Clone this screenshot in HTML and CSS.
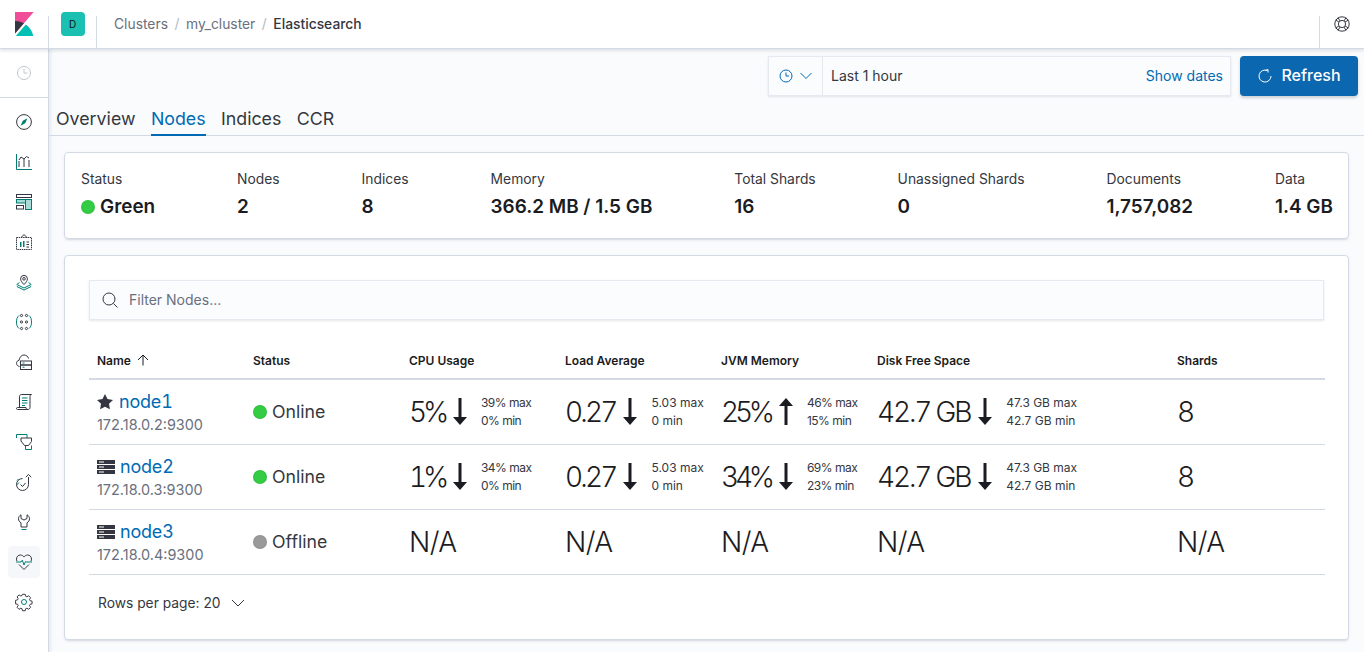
FILE: index.html
```html
<!DOCTYPE html>
<html lang="en">
<head>
    <meta charset="UTF-8">
    <meta name="viewport" content="width=device-width, initial-scale=1.0">
    <title>Elasticsearch - Stack Monitoring</title>
    <link rel="stylesheet" href="styles.css">
</head>
<body>
    <!-- Top bar -->
    <header class="topbar">
        <a class="logo-cell" href="#">
            <svg width="24" height="24" viewBox="0 0 32 32"><path d="M4 0v28.789L28.935.017z" fill="#F04E98"/><path d="M4 12v16.789l11.906-13.738A24.721 24.721 0 0 0 4 12" fill="#343741"/><path d="M18.479 16.664L6.268 30.754l-1.073 1.237h23.191c-1.252-6.292-4.883-11.719-9.908-15.327" fill="#00BFB3"/></svg>
        </a>
        <div class="space-cell"><span class="space-badge">D</span></div>
        <nav class="breadcrumbs">
            <a href="#">Clusters</a><span class="crumb-sep">/</span>
            <a href="#">my_cluster</a><span class="crumb-sep">/</span>
            <span class="crumb-current">Elasticsearch</span>
        </nav>
        <div class="help-cell">
            <svg width="16" height="16" viewBox="0 0 16 16" fill="none" stroke="#343741" stroke-width="1"><circle cx="8" cy="8" r="7.200"/><circle cx="8" cy="8" r="3.600"/><path d="M4 1.600l2 3.300M1.600 4l3.300 2M12 1.600l-2 3.300M14.400 4l-3.300 2M4 14.400l2-3.300M1.600 12l3.300-2M12 14.400l-2-3.300M14.400 12l-3.300-2"/></svg>
        </div>
    </header>

    <div class="layout">
        <!-- Side nav -->
        <aside class="sidenav">
            <div class="nav-recent">
                <svg width="16" height="16" viewBox="0 0 16 16" fill="none" stroke="#c2c7d0" stroke-width="1"><circle cx="8" cy="8" r="6.500"/><path d="M8 3.800V8h3.400"/></svg>
            </div>
            <ul class="nav-list">
                <li class="nav-item"><svg class="app-icon" viewBox="0 0 16 16"><circle class="ln" cx="8" cy="8" r="7.400"/><path class="fl" d="M11.400 4.300L9.200 9.200 4.600 11.700 6.800 6.800z"/></svg></li>
                <li class="nav-item"><svg class="app-icon" viewBox="0 0 16 16"><path class="tl" d="M.5 0v15.500H16"/><path class="ln" d="M3 13V7M8 13V5M13 13V6M3 6l2-3 3 2 2.500-2.500L13 4"/></svg></li>
                <li class="nav-item"><svg class="app-icon" viewBox="0 0 16 16"><rect class="ln" x=".5" y=".5" width="15" height="3"/><rect class="tl tint" x=".5" y="5.500" width="9" height="3.500"/><rect class="ln" x=".5" y="11.500" width="7" height="3.500"/><rect class="tl tint" x="9.500" y="5.500" width="6" height="10"/></svg></li>
                <li class="nav-item"><svg class="app-icon" viewBox="0 0 16 16"><path class="ln" d="M.5 3.500h15v12H.5z" stroke-dasharray="1.500 .7"/><path class="ln" d="M5 3.500L8 .6l3 2.900"/><path class="fl" d="M4 8h1.500v5H4zM7 7h1.500v6H7z"/><path class="ln" d="M10.500 8H13M10.500 10.500H13M10.500 13H13"/></svg></li>
                <li class="nav-item"><svg class="app-icon" viewBox="0 0 16 16"><path class="ln" d="M8 10.500C6 8.500 4.600 6.800 4.600 4.800a3.400 3.400 0 0 1 6.800 0c0 2-1.400 3.700-3.400 5.700z"/><circle class="ln" cx="8" cy="4.800" r="1.300"/><path class="tl" d="M3.500 8.500L.8 10.500 8 14l7.200-3.500-2.700-2M.8 12.500L8 16l7.200-3.500"/></svg></li>
                <li class="nav-item"><svg class="app-icon" viewBox="0 0 16 16"><path class="tl" d="M3 1.500C1 3 .5 5.500.5 8s.5 5 2.500 6.500M13 1.500c2 1.500 2.500 4 2.500 6.500s-.5 5-2.500 6.500"/><g class="ln"><circle cx="5.500" cy="1.500" r="1.100"/><circle cx="10.500" cy="1.500" r="1.100"/><circle cx="5.500" cy="8" r="1.100"/><circle cx="10.500" cy="8" r="1.100"/><circle cx="5.500" cy="14.500" r="1.100"/><circle cx="10.500" cy="14.500" r="1.100"/></g></svg></li>
                <li class="nav-item"><svg class="app-icon" viewBox="0 0 16 16"><path class="ln" d="M3.500 12.500C1.500 12 .5 10.800.5 9.300c0-1.500 1-2.800 2.500-3C3.500 3.300 5.500 1 8 1c2.300 0 4 1.500 4.500 3.500"/><rect class="ln" x="4.500" y="7" width="11" height="4"/><rect class="ln" x="4.500" y="11" width="11" height="4.500"/><path class="tl" d="M6.500 9h2M6.500 13.200h2"/></svg></li>
                <li class="nav-item"><svg class="app-icon" viewBox="0 0 16 16"><path class="ln" d="M3.500 13V2.500C3.500 1.400 4.200.5 5.500.5h10c-1 0-1.500 1-1.500 2v11c0 1.200-.8 2-2 2H1.500c-.8 0-1-.6-1-1s.2-1 1-1h8.500c0 1 .5 2 2 2"/><path class="tl" d="M6 4h5.500M6 6.500h5.500M6 9h5.500M6 11.500h3"/></svg></li>
                <li class="nav-item"><svg class="app-icon" viewBox="0 0 16 16"><path class="tl" d="M.5 4V.5h10.500v3.500M15.500 11.500v4h-6v-3.500"/><path class="ln" d="M5 4h10.500v3.500L12.500 11.500H8.500L5 7z" fill="none"/></svg></li>
                <li class="nav-item"><svg class="app-icon" viewBox="0 0 16 16"><path class="ln" d="M12.500 3v7.500a6 6 0 1 1-6-6"/><path class="ln" d="M9.800 3.300L12.500.4l2.700 2.900"/><path class="tl" d="M3 8.500L.8 11M1 6.500c.4-.6.900-1.100 1.500-1.500"/><path class="ln" d="M4.500 10.500l2 2 3-3.500"/></svg></li>
                <li class="nav-item"><svg class="app-icon" viewBox="0 0 16 16"><path class="ln" d="M5 .8C3.300 1.600 2.500 3.200 2.500 4.800c0 1.800 1 3.200 2.500 4V13h6V8.800c1.500-.8 2.500-2.200 2.500-4 0-1.600-.8-3.200-2.500-4V4.500L8 6 5 4.500z"/><path class="tl" d="M5.500 15.500h5"/></svg></li>
                <li class="nav-item active"><svg class="app-icon" viewBox="0 0 16 16"><path class="ln" d="M1 7C.6 6.200.5 5.600.5 5c0-2.400 1.900-4 3.800-4C5.800 1 7.200 1.800 8 3c.8-1.200 2.200-2 3.700-2 1.900 0 3.800 1.600 3.800 4 0 .6-.1 1.200-.5 2M3 10.500l5 5 5-5"/><path class="tl" d="M0 8h5l1.300-1.800L8 11l1.500-3.500.8.500H16"/></svg></li>
                <li class="nav-item"><svg class="app-icon" viewBox="0 0 16 16"><path class="ln" d="M6.600.5h2.800l.4 2 1.300.6 1.800-1.100 2 2-1.100 1.800.6 1.300 2 .4v2.800l-2 .4-.6 1.300 1.100 1.800-2 2-1.800-1.100-1.300.6-.4 2H6.600l-.4-2-1.300-.6-1.800 1.100-2-2 1.100-1.800-.6-1.300-2-.4V6.600l2-.4.6-1.300L1.100 3.100l2-2 1.800 1.100 1.300-.6z" transform="translate(0 -.2) scale(.98)"/><circle class="tl" cx="8" cy="8" r="2.500"/></svg></li>
            </ul>
        </aside>

        <main class="content">
            <!-- Time picker -->
            <div class="toolbar">
                <div class="datepicker">
                    <div class="datepicker-quick">
                        <svg width="14" height="14" viewBox="0 0 14 14" fill="none" stroke="#006bb4" stroke-width="1"><circle cx="7" cy="7" r="6"/><path d="M7 3.500V7h3"/></svg>
                        <svg width="12" height="8" viewBox="0 0 12 8" fill="none" stroke="#006bb4" stroke-width="1"><path d="M.5 1l5.500 5.500L11.500 1"/></svg>
                    </div>
                    <div class="datepicker-range">
                        <span>Last 1 hour</span>
                        <a href="#" class="show-dates">Show dates</a>
                    </div>
                </div>
                <button class="refresh-btn">
                    <svg width="14" height="14" viewBox="0 0 14 14" fill="none" stroke="#fff" stroke-width="1"><path d="M9.500 1.600A6 6 0 1 0 13 7"/><path d="M7.500 1.500l2.500-1v3"/></svg>
                    <span>Refresh</span>
                </button>
            </div>

            <!-- Tabs -->
            <div class="tabs">
                <a href="#" class="tab">Overview</a>
                <a href="#" class="tab selected">Nodes</a>
                <a href="#" class="tab">Indices</a>
                <a href="#" class="tab">CCR</a>
            </div>

            <!-- Summary -->
            <section class="panel summary">
                <div class="stat"><div class="stat-label">Status</div><div class="stat-value"><span class="dot green"></span>Green</div></div>
                <div class="stat"><div class="stat-label">Nodes</div><div class="stat-value">2</div></div>
                <div class="stat"><div class="stat-label">Indices</div><div class="stat-value">8</div></div>
                <div class="stat"><div class="stat-label">Memory</div><div class="stat-value">366.2 MB / 1.5 GB</div></div>
                <div class="stat"><div class="stat-label">Total Shards</div><div class="stat-value">16</div></div>
                <div class="stat"><div class="stat-label">Unassigned Shards</div><div class="stat-value">0</div></div>
                <div class="stat"><div class="stat-label">Documents</div><div class="stat-value">1,757,082</div></div>
                <div class="stat"><div class="stat-label">Data</div><div class="stat-value">1.4 GB</div></div>
            </section>

            <!-- Nodes table -->
            <section class="panel nodes">
                <div class="filter">
                    <svg width="16" height="16" viewBox="0 0 16 16" fill="none" stroke="#343741" stroke-width="1"><circle cx="7" cy="7" r="6"/><path d="M11.500 11.500L15.500 15.500"/></svg>
                    <input type="text" placeholder="Filter Nodes...">
                </div>

                <table class="nodes-table">
                    <thead>
                        <tr>
                            <th>Name <svg class="sort-icon" width="12" height="12" viewBox="0 0 12 12" fill="none" stroke="#1a1c21" stroke-width="1"><path d="M6 1v10.500M1 6l5-5 5 5"/></svg></th>
                            <th>Status</th>
                            <th>CPU Usage</th>
                            <th>Load Average</th>
                            <th>JVM Memory</th>
                            <th class="wide">Disk Free Space</th>
                            <th>Shards</th>
                        </tr>
                    </thead>
                    <tbody>
                        <tr>
                            <td>
                                <div class="node-name"><svg class="star" width="16" height="16" viewBox="0 0 16 16"><path d="M8 0l2.500 5.100 5.500.8-4 3.900.9 5.500L8 12.700l-4.900 2.600.9-5.500-4-3.900 5.500-.8z" fill="#343741"/></svg><a href="#">node1</a></div>
                                <div class="node-addr">172.18.0.2:9300</div>
                            </td>
                            <td><div class="status"><span class="dot green"></span>Online</div></td>
                            <td><div class="metric"><span class="metric-value pct">5%</span><svg class="trend" width="14" height="28" viewBox="0 0 14 28"><path d="M5.500 0h3v20h-3zM0 19h14l-7 8z" fill="#1a1c21"/></svg><div class="metric-range pct"><span>39% max</span><span>0% min</span></div></div></td>
                            <td><div class="metric"><span class="metric-value dec">0.27</span><svg class="trend" width="14" height="28" viewBox="0 0 14 28"><path d="M5.500 0h3v20h-3zM0 19h14l-7 8z" fill="#1a1c21"/></svg><div class="metric-range"><span>5.03 max</span><span>0 min</span></div></div></td>
                            <td><div class="metric"><span class="metric-value pct">25%</span><svg class="trend" width="14" height="28" viewBox="0 0 14 28"><path d="M5.500 27h3V7h-3zM0 8h14L7 0z" fill="#1a1c21"/></svg><div class="metric-range pct"><span>46% max</span><span>15% min</span></div></div></td>
                            <td><div class="metric"><span class="metric-value">42.7 GB</span><svg class="trend" width="14" height="28" viewBox="0 0 14 28"><path d="M5.500 0h3v20h-3zM0 19h14l-7 8z" fill="#1a1c21"/></svg><div class="metric-range"><span>47.3 GB max</span><span>42.7 GB min</span></div></div></td>
                            <td><span class="plain-value">8</span></td>
                        </tr>
                        <tr>
                            <td>
                                <div class="node-name"><svg class="server" width="18" height="16" viewBox="0 0 18 16"><path d="M0 1h18v4H0zM0 6h18v4H0zM0 11h18v4H0z" fill="#343741"/><path d="M2 2.500h5v1H2zM2 7.500h5v1H2zM2 12.500h5v1H2z" fill="#fff"/></svg><a href="#">node2</a></div>
                                <div class="node-addr">172.18.0.3:9300</div>
                            </td>
                            <td><div class="status"><span class="dot green"></span>Online</div></td>
                            <td><div class="metric"><span class="metric-value pct">1%</span><svg class="trend" width="14" height="28" viewBox="0 0 14 28"><path d="M5.500 0h3v20h-3zM0 19h14l-7 8z" fill="#1a1c21"/></svg><div class="metric-range pct"><span>34% max</span><span>0% min</span></div></div></td>
                            <td><div class="metric"><span class="metric-value dec">0.27</span><svg class="trend" width="14" height="28" viewBox="0 0 14 28"><path d="M5.500 0h3v20h-3zM0 19h14l-7 8z" fill="#1a1c21"/></svg><div class="metric-range"><span>5.03 max</span><span>0 min</span></div></div></td>
                            <td><div class="metric"><span class="metric-value pct">34%</span><svg class="trend" width="14" height="28" viewBox="0 0 14 28"><path d="M5.500 0h3v20h-3zM0 19h14l-7 8z" fill="#1a1c21"/></svg><div class="metric-range pct"><span>69% max</span><span>23% min</span></div></div></td>
                            <td><div class="metric"><span class="metric-value">42.7 GB</span><svg class="trend" width="14" height="28" viewBox="0 0 14 28"><path d="M5.500 0h3v20h-3zM0 19h14l-7 8z" fill="#1a1c21"/></svg><div class="metric-range"><span>47.3 GB max</span><span>42.7 GB min</span></div></div></td>
                            <td><span class="plain-value">8</span></td>
                        </tr>
                        <tr>
                            <td>
                                <div class="node-name"><svg class="server" width="18" height="16" viewBox="0 0 18 16"><path d="M0 1h18v4H0zM0 6h18v4H0zM0 11h18v4H0z" fill="#343741"/><path d="M2 2.500h5v1H2zM2 7.500h5v1H2zM2 12.500h5v1H2z" fill="#fff"/></svg><a href="#">node3</a></div>
                                <div class="node-addr">172.18.0.4:9300</div>
                            </td>
                            <td><div class="status"><span class="dot gray"></span>Offline</div></td>
                            <td><span class="plain-value">N/A</span></td>
                            <td><span class="plain-value">N/A</span></td>
                            <td><span class="plain-value">N/A</span></td>
                            <td><span class="plain-value">N/A</span></td>
                            <td><span class="plain-value">N/A</span></td>
                        </tr>
                    </tbody>
                </table>

                <div class="pagination">
                    Rows per page: 20
                    <svg width="14" height="8" viewBox="0 0 14 8" fill="none" stroke="#343741" stroke-width="1"><path d="M1 1l6 6 6-6"/></svg>
                </div>
            </section>
        </main>
    </div>
</body>
</html>
```

FILE: styles.css
```css
/* ===== Base ===== */
* {
    box-sizing: border-box;
}

html, body {
    height: 100%;
}

body {
    margin: 0;
    overflow: hidden;
    background: #fafbfd;
    color: #343741;
    font-family: Inter, "Liberation Sans", sans-serif;
    font-size: 14px;
}

a {
    color: #006bb4;
    text-decoration: none;
}

/* ===== Top bar ===== */
.topbar {
    position: relative;
    z-index: 2;
    display: flex;
    height: 49px;
    background: #fff;
    border-bottom: 1px solid #d3dae6;
    box-shadow: 0 2px 3px rgba(65, 78, 101, 0.14);
}

.logo-cell {
    width: 48px;
    display: flex;
    align-items: center;
    padding-left: 12px;
}

.space-cell {
    width: 49px;
    display: flex;
    align-items: center;
    justify-content: center;
    position: relative;
}

.space-cell::before,
.space-cell::after,
.help-cell::before {
    content: "";
    position: absolute;
    top: 16px;
    bottom: 0;
    width: 1px;
    background: #d3dae6;
}

.space-cell::before {
    left: 0;
}

.space-cell::after {
    right: 0;
}

.space-badge {
    width: 24px;
    height: 24px;
    border-radius: 4px;
    background: #1bc0b3;
    color: #111;
    font-size: 10px;
    display: flex;
    align-items: center;
    justify-content: center;
}

.breadcrumbs {
    flex: 1;
    display: flex;
    align-items: center;
    padding: 0 0 0 17px;
    font-size: 13.85px;
}

.breadcrumbs a {
    color: #69707d;
}

.crumb-sep {
    margin: 0 6.5px;
    color: #b4bac6;
}

.crumb-current {
    color: #343741;
    font-weight: 500;
}

.help-cell {
    position: relative;
    width: 45px;
    display: flex;
    align-items: center;
    justify-content: center;
}

.help-cell::before {
    left: 0;
}

/* ===== Layout ===== */
.layout {
    display: flex;
    height: 603px;
}

.sidenav {
    width: 49px;
    flex: none;
    background: #fff;
    border-right: 1px solid #d3dae6;
    box-shadow: 2px 0 3px rgba(65, 78, 101, 0.1);
}

.nav-recent {
    height: 49px;
    display: flex;
    align-items: center;
    justify-content: center;
    border-bottom: 1px solid #d3dae6;
}

.nav-list {
    list-style: none;
    margin: 0;
    padding: 4px 8px 0;
}

.nav-item {
    height: 40px;
    display: flex;
    align-items: center;
    justify-content: center;
}

.nav-item.active {
    height: 32px;
    margin: 4px 0;
    background: #f5f7fa;
    border-radius: 4px;
}

.app-icon {
    width: 16px;
    height: 16px;
    overflow: visible;
}

.app-icon .ln,
.app-icon .ln circle {
    fill: none;
    stroke: #343741;
    stroke-width: 1;
}

.app-icon .tl {
    fill: none;
    stroke: #017d73;
    stroke-width: 1;
}

.app-icon .tl.tint {
    fill: #a8dbd6;
}

.app-icon .fl {
    fill: #017d73;
}

/* ===== Content ===== */
.content {
    flex: 1;
    min-width: 0;
}

.toolbar {
    display: flex;
    justify-content: flex-end;
    gap: 9px;
    padding: 7px 6px 0 0;
}

.datepicker {
    width: 463px;
    height: 40px;
    display: flex;
    background: #fbfcfd;
    border: 1px solid #e6e9ef;
    box-shadow: 0 1px 2px rgba(65, 78, 101, 0.14);
}

.datepicker-quick {
    width: 54px;
    display: flex;
    align-items: center;
    justify-content: center;
    gap: 7px;
    border-right: 1px solid #e6e9ef;
}

.datepicker-range {
    flex: 1;
    display: flex;
    align-items: center;
    justify-content: space-between;
    padding: 0 7px 2px 8px;
    color: #343741;
}

.refresh-btn {
    width: 118px;
    height: 40px;
    display: flex;
    align-items: center;
    justify-content: center;
    gap: 9px;
    padding: 0 0 0 1px;
    border: 0;
    border-radius: 4px;
    background: #0a67b0;
    color: #fff;
    font-family: inherit;
    font-size: 16px;
    font-weight: 500;
    box-shadow: 0 2px 3px rgba(65, 78, 101, 0.25);
}

.refresh-btn span {
    padding-bottom: 2px;
}

/* ===== Tabs ===== */
.tabs {
    display: flex;
    gap: 15.4px;
    height: 40px;
    padding: 4px 0 0 7px;
    border-bottom: 1px solid #d3dae6;
}

.tab {
    height: 36px;
    color: #343741;
    font-size: 17.8px;
    line-height: 38px;
}

.tab.selected {
    color: #006bb4;
    border-bottom: 2px solid #006bb4;
}

/* ===== Panels ===== */
.panel {
    margin: 16px 15px 0;
    background: #fff;
    border: 1px solid #d3dae6;
    border-radius: 4px;
    box-shadow: 0 2px 2px -1px rgba(152, 162, 179, 0.3), 0 1px 5px -2px rgba(152, 162, 179, 0.3);
}

.summary {
    height: 87px;
    display: flex;
    justify-content: space-between;
    padding: 18px 15px 0 16px;
}

.stat-label {
    font-size: 13.85px;
    line-height: 17px;
    color: #343741;
}

.stat-value {
    display: flex;
    align-items: center;
    margin-top: 7px;
    font-size: 18.9px;
    line-height: 24px;
    font-weight: 600;
    color: #1a1c21;
}

.dot {
    display: inline-block;
    width: 14px;
    height: 14px;
    border-radius: 50%;
    margin-right: 5px;
    border: 1px solid rgba(0, 0, 0, 0.06);
}

.dot.green {
    background: #33cc44;
}

.dot.gray {
    background: #9a9a9a;
}

.nodes {
    height: 385px;
    padding: 24px 24px 0;
}

.filter {
    height: 40px;
    display: flex;
    align-items: center;
    gap: 9px;
    padding-left: 12px;
    background: #fbfcfd;
    border: 1px solid #e6e9ef;
    box-shadow: 0 1px 2px rgba(65, 78, 101, 0.14);
}

.filter input {
    flex: 1;
    border: 0;
    outline: 0;
    padding-bottom: 2px;
    background: none;
    font-family: inherit;
    font-size: 14px;
}

.filter input::placeholder {
    color: #69707d;
}

/* ===== Nodes table ===== */
.nodes-table {
    width: 100%;
    margin-top: 21px;
    border-collapse: collapse;
    table-layout: fixed;
}

.nodes-table th {
    height: 38px;
    width: 156px;
    padding: 2px 8px 0;
    text-align: left;
    font-size: 12px;
    font-weight: 600;
    color: #1a1c21;
    border-bottom: 2px solid #d3dae6;
}

.nodes-table th.wide {
    width: 300px;
}

.sort-icon {
    margin-left: 3px;
    vertical-align: -1px;
}

.nodes-table td {
    height: 65px;
    padding: 0 8px;
    border-bottom: 1px solid #d3dae6;
    white-space: nowrap;
}

.node-name {
    display: flex;
    align-items: center;
    gap: 5px;
    font-size: 18px;
    line-height: 22px;
    letter-spacing: -0.2px;
    font-variant-numeric: tabular-nums;
}

.star {
    margin-right: 1px;
}

.node-addr {
    margin-top: 3px;
    font-size: 14.45px;
    line-height: 17px;
    color: #69707d;
}

.status {
    display: flex;
    align-items: center;
    font-size: 17.7px;
    color: #343741;
}

.metric {
    display: flex;
    align-items: center;
}

.metric-value,
.plain-value {
    font-size: 28px;
    font-weight: 300;
    letter-spacing: -0.6px;
    color: #1a1c21;
    font-variant-numeric: tabular-nums;
}

.metric-value {
    letter-spacing: -2.17px;
}

.metric-value.dec {
    letter-spacing: -2.85px;
}

.metric-value.pct {
    letter-spacing: -4.2px;
}

.trend {
    margin: 0 14px 0 8px;
    flex: none;
}

.metric-range {
    display: flex;
    flex-direction: column;
    font-size: 12px;
    line-height: 18px;
    color: #343741;
}

.metric-range.pct {
    letter-spacing: -0.5px;
}

.pagination {
    display: flex;
    align-items: center;
    gap: 10px;
    margin: 20px 0 0 9px;
    font-size: 13.8px;
    color: #343741;
}
```
